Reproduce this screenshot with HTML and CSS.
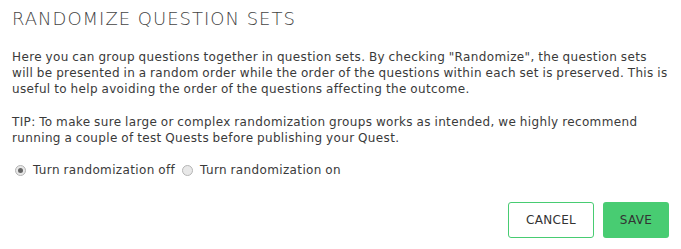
FILE: index.html
```html
<!DOCTYPE html>
<html>
<head>
<meta charset="utf-8">
<link rel="stylesheet" href="styles.css">
</head>
<body>
<div class="dialog">
  <h1 class="title">RANDOMIZE QUESTION SETS</h1>
  <p class="text">Here you can group questions together in question sets. By checking "Randomize", the question sets<br>will be presented in a random order while the order of the questions within each set is preserved. This is<br>useful to help avoiding the order of the questions affecting the outcome.</p>
  <p class="text tip">TIP: To make sure large or complex randomization groups works as intended, we highly recommend<br>running a couple of test Quests before publishing your Quest.</p>
  <div class="options">
    <label class="option"><span class="radio checked"></span>Turn randomization off</label>
    <label class="option"><span class="radio"></span>Turn randomization on</label>
  </div>
  <div class="actions">
    <button class="btn btn-cancel">CANCEL</button>
    <button class="btn btn-save">SAVE</button>
  </div>
</div>
</body>
</html>
```
FILE: styles.css
```css
html, body {
  margin: 0;
  padding: 0;
  background: #fff;
}
.dialog {
  padding: 7px 12px 0 12px;
  font-family: "DejaVu Sans", sans-serif;
  color: #3a3a3a;
  font-size: 12px;
  letter-spacing: 0.36px;
  word-spacing: -0.6px;
}
.title {
  margin: 0;
  font-size: 18px;
  font-weight: 200;
  line-height: 24px;
  letter-spacing: 1px;
  word-spacing: 0;
  color: #444;
}
.text {
  margin: 18px 0 0 0;
  line-height: 16px;
  white-space: nowrap;
}
.tip {
  margin-top: 17px;
}
.options {
  margin-top: 16px;
  display: flex;
  align-items: center;
  height: 16px;
}
.option {
  display: flex;
  align-items: center;
  margin-right: 4px;
}
.radio {
  width: 11px;
  height: 11px;
  border: 1px solid #b5b5b5;
  border-radius: 50%;
  background: #e8e8e8;
  margin: 0 7px 0 3px;
  display: flex;
  align-items: center;
  justify-content: center;
  box-sizing: border-box;
}
.radio.checked::after {
  content: "";
  width: 5px;
  height: 5px;
  border-radius: 50%;
  background: #666;
}
.actions {
  display: flex;
  justify-content: flex-end;
  gap: 9px;
  margin-top: 24px;
}
.btn {
  height: 36px;
  border-radius: 3px;
  font-family: "DejaVu Sans", sans-serif;
  font-size: 12px;
  letter-spacing: 0.3px;
  color: #333;
  padding: 0;
}
.btn-cancel {
  width: 86px;
  background: #fff;
  border: 1px solid #48cc72;
}
.btn-save {
  width: 66px;
  background: #48cc72;
  border: none;
}
```
